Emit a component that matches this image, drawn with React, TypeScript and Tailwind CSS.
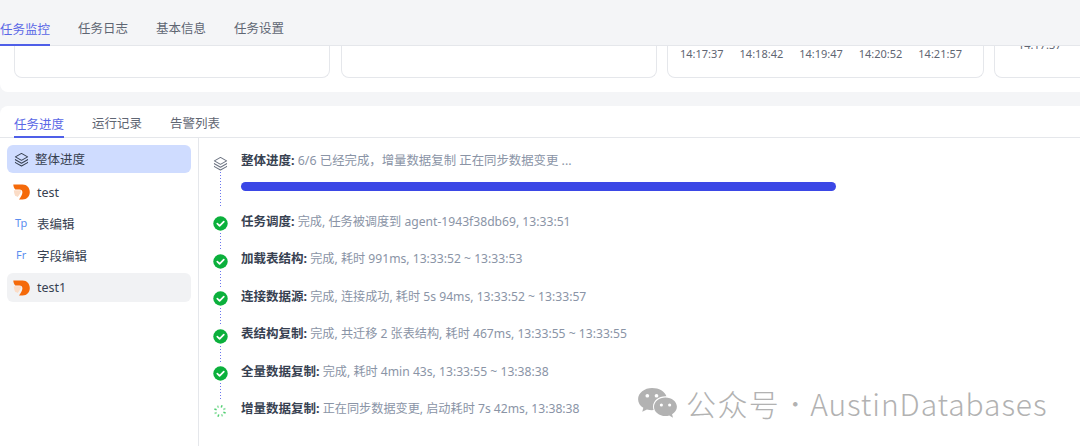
import React from "react";

const font = { fontFamily: '"Noto Sans", "Noto Sans CJK SC", sans-serif' };

function Layers({ className, color }: { className?: string; color: string }) {
  return (
    <svg viewBox="0 0 16 16" className={className} fill="none" stroke={color} strokeWidth="1.1" strokeLinejoin="round">
      <path d="M8 1.5 14.5 5.2 8 8.9 1.5 5.2Z" />
      <path d="M2.2 7.9 1.5 8.3 8 12 14.5 8.3 13.8 7.9" />
      <path d="M2.2 10.9 1.5 11.3 8 15 14.5 11.3 13.8 10.9" />
    </svg>
  );
}

function Logo() {
  return (
    <svg viewBox="0 0 17 16" className="w-[17px] h-[16px] shrink-0">
      <path d="M0.3 0.5H9.5C14 0.5 16.8 4 16.8 8C16.8 12.2 14 15.5 9.5 15.5H6C7.8 13.2 9.2 11 9.4 8.5C9.5 6.6 8.4 5.4 6.5 5.4H2.3C1.1 4.4 0.4 2.6 0.3 0.5Z" fill="#f56a0a" />
      <path d="M0.8 6.2H8.3C8 8.8 6.4 11 4.6 13C3.8 12.4 3 12 2.3 12C1.5 10.200 0.9 8 0.8 6.2Z" fill="#fbdcc6" />
    </svg>
  );
}

function Check() {
  return (
    <svg viewBox="0 0 15 15" className="w-[15px] h-[15px]">
      <circle cx="7.5" cy="7.5" r="7.2" fill="#0bb03c" />
      <path d="M4.3 7.7 6.6 9.9 10.8 5.6" fill="none" stroke="white" strokeWidth="1.7" strokeLinecap="round" strokeLinejoin="round" />
    </svg>
  );
}

function Spinner() {
  const spokes = [0, 45, 90, 135, 180, 225, 270, 315];
  return (
    <svg viewBox="0 0 14 14" className="w-[14px] h-[14px]">
      {spokes.map((a, i) => (
        <line key={a} x1="7" y1="1" x2="7" y2="3.4" stroke="#34c759" strokeOpacity={i % 2 ? 0.55 : 0.85} strokeWidth="1.5" transform={`rotate(${a + 20} 7 7)`} />
      ))}
    </svg>
  );
}

function Line({ className }: { className: string }) {
  return <div className={`w-px bg-[repeating-linear-gradient(to_bottom,#6b77ee_0_1px,transparent_1px_3px)] ${className}`} />;
}

const steps: [string, string, boolean][] = [
  ["任务调度:", "完成, 任务被调度到 agent-1943f38db69, 13:33:51", true],
  ["加载表结构:", "完成, 耗时 991ms, 13:33:52 ~ 13:33:53", true],
  ["连接数据源:", "完成, 连接成功, 耗时 5s 94ms, 13:33:52 ~ 13:33:57", true],
  ["表结构复制:", "完成, 共迁移 2 张表结构, 耗时 467ms, 13:33:55 ~ 13:33:55", true],
  ["全量数据复制:", "完成, 耗时 4min 43s, 13:33:55 ~ 13:38:38", true],
  ["增量数据复制:", "正在同步数据变更, 启动耗时 7s 42ms, 13:38:38", false],
];

const times = ["14:17:37", "14:18:42", "14:19:47", "14:20:52", "14:21:57"];

export default function App() {
  return (
    <div style={font} className="relative w-[1080px] h-[446px] overflow-hidden bg-[#f4f5f7]">
      {/* top tabs */}
      <div className="h-[46px] border-b border-[#e5e7eb] flex items-end gap-[28px] text-[12.5px] text-[#5f6673] whitespace-nowrap">
        {["任务监控", "任务日志", "基本信息", "任务设置"].map((t, i) => (
          <div key={t} className={i === 0 ? "w-[50px] h-[31px] pt-[5px] leading-[20px] border-b-2 border-[#4f5fe8] text-[#5a67e6] -mb-px" : "h-[31px] pt-[5px] leading-[20px]"}>
            {t}
          </div>
        ))}
      </div>

      {/* chart cards strip */}
      <div className="h-[46px] bg-white rounded-bl-lg flex pl-[14px] overflow-hidden">
        <div className="w-[316px] h-[32px] shrink-0 bg-white border border-t-0 border-[#e5e7eb] rounded-b-lg" />
        <div className="w-[316px] h-[32px] ml-[11px] shrink-0 bg-white border border-t-0 border-[#e5e7eb] rounded-b-lg" />
        <div className="w-[317px] h-[32px] ml-[10px] shrink-0 bg-white border border-t-0 border-[#e5e7eb] rounded-b-lg flex justify-between pl-[12px] pr-[21px] text-[11px] leading-[15px] text-[#5f6673]">
          {times.map((t) => (
            <span key={t}>{t}</span>
          ))}
        </div>
        <div className="w-[200px] h-[32px] ml-[10px] shrink-0 bg-white border border-t-0 border-r-0 border-[#e5e7eb] rounded-bl-lg overflow-hidden flex pl-[23px] text-[11px] leading-[15px] text-[#5f6673]">
          <span className="-mt-[9px] whitespace-nowrap">14:17:37</span>
        </div>
      </div>

      {/* task panel */}
      <div className="mt-[14px] h-[340px] bg-white rounded-tl-lg">
        <div className="h-[32px] border-b border-[#e5e7eb] flex items-end gap-[28px] pl-[14px] text-[12.5px] text-[#5f6673] whitespace-nowrap">
          {["任务进度", "运行记录", "告警列表"].map((t, i) => (
            <div key={t} className={i === 0 ? "h-[26px] pt-[3px] w-[50px] leading-[20px] border-b-2 border-[#4f5fe8] text-[#5a67e6] -mb-px" : "h-[26px] pt-[3px] leading-[20px]"}>
              {t}
            </div>
          ))}
        </div>

        <div className="flex h-[308px]">
          {/* sidebar */}
          <div className="w-[199px] shrink-0 border-r border-[#e5e7eb] pl-[7px] pr-[7px] pt-[7px] text-[12.5px] text-[#374151]">
            <div className="h-[28px] w-[184px] rounded-md bg-[#cfdcff] flex items-center pl-[7px] gap-[6px]">
              <Layers className="w-[15px] h-[15px]" color="#374151" />
              <span className="pt-[2px]">整体进度</span>
            </div>
            <div className="h-[32px] mt-[3px] flex items-center pl-[6px] gap-[7px]">
              <Logo />
              <span className="pt-[2px]">test</span>
            </div>
            <div className="h-[32px] flex items-center pl-[8px]">
              <span className="w-[22px] text-[11px] text-[#5b8def] -mt-[1px]">Tp</span>
              <span className="pt-[2px]">表编辑</span>
            </div>
            <div className="h-[32px] flex items-center pl-[9px]">
              <span className="w-[21px] text-[11px] text-[#5b8def] -mt-[1px]">Fr</span>
              <span className="pt-[2px]">字段编辑</span>
            </div>
            <div className="h-[29px] w-[184px] mt-[1px] rounded-md bg-[#f1f2f4] flex items-center pl-[6px] gap-[7px]">
              <Logo />
              <span className="pt-[2px]">test1</span>
            </div>
          </div>

          {/* timeline */}
          <div className="flex-1 pt-[14px] text-[12.15px] leading-[18px]">
            <div className="flex h-[62px]">
              <div className="w-[42px] shrink-0 flex flex-col items-center pt-[4px]">
                <Layers className="w-[15px] h-[15px]" color="#6b7280" />
                <Line className="h-[36px] mt-[1px]" />
              </div>
              <div className="flex-1">
                <div className="text-[#8a94a6] truncate text-[12.4px]">
                  <b className="font-bold text-[#374151] text-[12.5px]">整体进度:</b> 6/6 已经完成，增量数据复制 正在同步数据变更 ...
                </div>
                <div className="w-[595px] h-[9px] mt-[12px] rounded-full bg-[#3b47e6]" />
              </div>
            </div>
            {steps.map(([title, detail, done], i) => (
              <div key={title} className="flex h-[37.5px]">
                <div className="w-[42px] shrink-0 flex flex-col items-center pt-[2px]">
                  {done ? <Check /> : <Spinner />}
                  {i < 5 && <Line className="h-[18px] mt-[2px]" />}
                </div>
                <div className="text-[#8a94a6] -mt-[1.5px]">
                  <b className="font-bold text-[#374151] text-[12.5px]">{title}</b> {detail}
                </div>
              </div>
            ))}
          </div>
        </div>
      </div>

      {/* watermark overlay */}
      <div className="absolute left-[637px] top-[383px] flex items-center text-[#b2b2b2] whitespace-nowrap">
        <svg viewBox="0 0 42 34" className="w-[41px] h-[33px]">
          <path d="M15.5 1C7.5 1 1 6.1 1 12.5c0 3.7 2.1 6.9 5.4 9L5.3 25.6l4.8-2.5c1.7.5 3.5.8 5.4.8.5 0 1 0 1.5-.1-.4-1.1-.6-2.2-.6-3.4 0-6 5.6-10.8 12.8-10.8h1C28.6 4.6 22.6 1 15.5 1Z" fill="#b2b2b2" />
          <path d="M41 20.3c0-5.3-5.3-9.6-11.8-9.6s-11.8 4.3-11.8 9.6 5.3 9.6 11.8 9.6c1.4 0 2.7-.2 3.9-.6l3.9 2.3-1-3.6c3-1.8 5-4.6 5-7.7Z" fill="#b2b2b2" />
          <circle cx="10.5" cy="9" r="1.9" fill="white" />
          <circle cx="20" cy="9" r="1.9" fill="white" />
          <circle cx="25" cy="18.5" r="1.6" fill="white" />
          <circle cx="33.5" cy="18.5" r="1.6" fill="white" />
        </svg>
        <span style={{ fontFamily: '"Noto Sans CJK SC", sans-serif' }} className="ml-[8px] flex text-[30px] leading-[40px] font-light">
          <span className="tracking-[1.4px]">公众号</span>
          <span className="w-[30px] text-center text-[24px]">·</span>
          <span className="tracking-[0.9px]">AustinDatabases</span>
        </span>
      </div>
    </div>
  );
}
